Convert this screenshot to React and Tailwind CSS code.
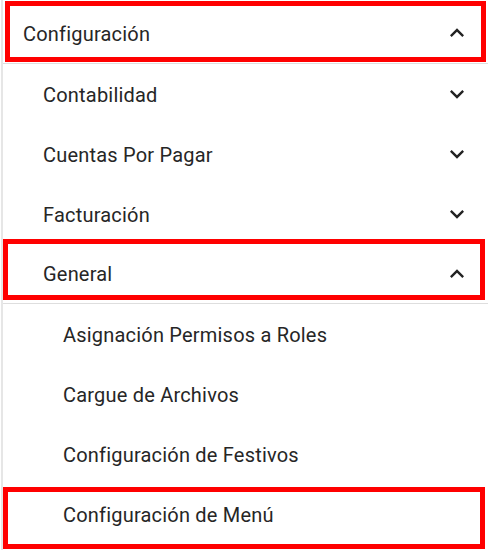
import React from "react";

function Chevron({ up }) {
  return (
    <svg width="28" height="28" viewBox="0 0 24 24" className="shrink-0 text-[#222]">
      {up ? (
        <path fill="currentColor" d="M12 8l-6 6 1.41 1.41L12 10.83l4.59 4.58L18 14z" />
      ) : (
        <path fill="currentColor" d="M16.59 8.59L12 13.17 7.41 8.59 6 10l6 6 6-6z" />
      )}
    </svg>
  );
}

function Row({ label, indent, chevron, border, tall }) {
  const pad = indent === 0 ? "pl-[20px]" : indent === 1 ? "pl-[40px]" : "pl-[60px]";
  return (
    <div
      className={`flex ${tall ? "h-[61px]" : "h-[60px]"} items-center justify-between ${pad} pr-[17px] ${
        border ? "border-b border-[#dedede]" : ""
      }`}
    >
      <span className="pt-px text-[20px] font-normal tracking-[0.2px] text-[#262626]">{label}</span>
      {chevron && <Chevron up={chevron === "up"} />}
    </div>
  );
}

export default function App() {
  return (
    <div
      className="relative h-[550px] w-[488px] overflow-hidden bg-white"
      style={{ fontFamily: "Roboto, 'Liberation Sans', sans-serif" }}
    >
      <div className="ml-px border-l-2 border-[#e6e6e6] pt-[3px]">
        <Row label="Configuración" indent={0} chevron="up" border tall />
        <Row label="Contabilidad" indent={1} chevron="down" />
        <Row label="Cuentas Por Pagar" indent={1} chevron="down" />
        <Row label="Facturación" indent={1} chevron="down" />
        <Row label="General" indent={1} chevron="up" border />
        <Row label="Asignación Permisos a Roles" indent={2} />
        <Row label="Cargue de Archivos" indent={2} />
        <Row label="Configuración de Festivos" indent={2} />
        <Row label="Configuración de Menú" indent={2} />
        <div className="h-[20px]" />
      </div>

      <div className="pointer-events-none absolute left-[5px] top-[1px] h-[61px] w-[481px] border-[5px] border-[#ff0000]" />
      <div className="pointer-events-none absolute left-[3px] top-[239px] h-[61px] w-[482px] border-[5px] border-[#ff0000]" />
      <div className="pointer-events-none absolute left-[3px] top-[487px] h-[62px] w-[482px] border-[5px] border-[#ff0000]" />
    </div>
  );
}
